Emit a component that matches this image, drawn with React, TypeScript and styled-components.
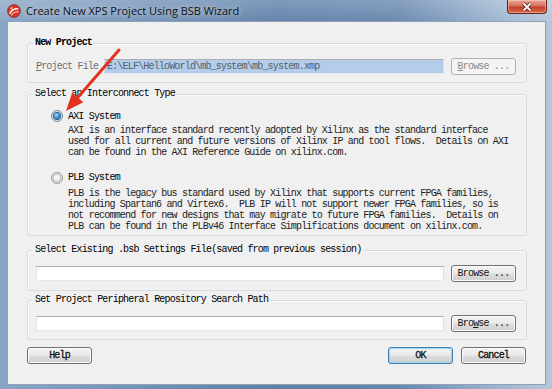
import React from "react";
import styled, { createGlobalStyle } from "styled-components";

const mono = `"Liberation Mono", "DejaVu Sans Mono", monospace`;
const tracking = "-0.82px";

const GlobalStyle = createGlobalStyle`
  html, body {
    margin: 0;
    padding: 0;
  }
  body {
    width: 552px;
    height: 389px;
    overflow: hidden;
    background: #fff;
  }
  * {
    box-sizing: border-box;
  }
`;

const AXI_TEXT = `AXI is an interface standard recently adopted by Xilinx as the standard interface
used for all current and future versions of Xilinx IP and tool flows.  Details on AXI
can be found in the AXI Reference Guide on xilinx.com.`;

const PLB_TEXT = `PLB is the legacy bus standard used by Xilinx that supports current FPGA families,
including Spartan6 and Virtex6.  PLB IP will not support newer FPGA families, so is
not recommend for new designs that may migrate to future FPGA families.  Details on
PLB can be found in the PLBv46 Interface Simplifications document on xilinx.com.`;

function AppIcon() {
  return (
    <svg width="14" height="14" viewBox="0 0 14 14">
      <circle cx="7" cy="7" r="6.4" fill="#d7352b" stroke="#8e1d16" strokeWidth="0.7" />
      <path d="M2.6 9.6 C4.6 6.2 7.6 4.6 11.2 4.8" stroke="#fff" strokeWidth="1.5" fill="none" />
      <path d="M4 11.4 C6 8.8 8.6 7.6 11.8 7.8" stroke="#f7c9b0" strokeWidth="1.1" fill="none" />
      <circle cx="4.6" cy="4.4" r="1.4" fill="#f29a6a" />
    </svg>
  );
}

export default function App() {
  return (
    <>
      <GlobalStyle />
      <Frame>
        <TitleBar>
          <AppIcon />
          <Title>Create New XPS Project Using BSB Wizard</Title>
          <CloseButton>
            <svg width="14" height="10" viewBox="0 0 14 10">
              <path d="M3.5 1.5 L10.5 8.5 M10.5 1.5 L3.5 8.5" stroke="#4a1a14" strokeWidth="3.4" />
              <path d="M3.5 1.5 L10.5 8.5 M10.5 1.5 L3.5 8.5" stroke="#fff" strokeWidth="1.8" />
            </svg>
          </CloseButton>
        </TitleBar>

        <Client>
          <Group $gap={15} $pad="9px 10px 7px 8px">
            <Legend $bold>New Project</Legend>
            <FileRow>
              <FieldLabel>
                <u>P</u>roject File
              </FieldLabel>
              <TextBox $selected readOnly value="E:\ELF\HelloWorld\mb_system\mb_system.xmp" />
              <BrowseButton disabled>
                <u>B</u>rowse ...
              </BrowseButton>
            </FileRow>
          </Group>

          <Group $gap={5} $pad="10px 10px 3px 8px">
            <Legend>Select an Interconnect Type</Legend>
            <OptionRow>
              <Radio $checked />
              <span>AXI System</span>
            </OptionRow>
            <Description>{AXI_TEXT}</Description>
            <OptionRow $top={13}>
              <Radio />
              <span>PLB System</span>
            </OptionRow>
            <Description $top={4}>{PLB_TEXT}</Description>
          </Group>

          <Group $gap={8} $pad="9px 10px 8px 8px">
            <Legend>Select Existing .bsb Settings File(saved from previous session)</Legend>
            <FileRow>
              <TextBox readOnly value="" />
              <BrowseButton>Browse ...</BrowseButton>
            </FileRow>
          </Group>

          <Group $gap={3} $pad="9px 10px 7px 8px">
            <Legend>Set Project Peripheral Repository Search Path</Legend>
            <FileRow>
              <TextBox readOnly value="" />
              <BrowseButton>
                Bro<u>w</u>se ...
              </BrowseButton>
            </FileRow>
          </Group>

          <ButtonBar>
            <DialogButton>Help</DialogButton>
            <DialogButton $default $push>
              OK
            </DialogButton>
            <DialogButton>Cancel</DialogButton>
          </ButtonBar>
        </Client>

        <Annotation width="552" height="389" viewBox="0 0 552 389">
          <line x1="119" y1="50" x2="77.8" y2="97.4" stroke="#e4321f" strokeWidth="3" strokeLinecap="round" />
          <polygon points="66,111 83.3,102.2 72.3,92.6" fill="#e4321f" />
        </Annotation>
      </Frame>
    </>
  );
}

const Frame = styled.div`
  position: relative;
  width: 552px;
  height: 389px;
  display: flex;
  flex-direction: column;
  padding: 0 6px 4px 7px;
  background: linear-gradient(
    90deg,
    #89a5c5 0%,
    #7594b9 22%,
    #5f7fa8 50%,
    #6686ae 72%,
    #9db5d0 90%,
    #b5c7dc 100%
  );
`;

const TitleBar = styled.div`
  height: 21px;
  flex: none;
  display: flex;
  align-items: center;
  background: linear-gradient(180deg, rgba(255, 255, 255, 0.22), rgba(255, 255, 255, 0.04));
  margin: 0 -6px 0 -7px;
  padding-left: 7px;
`;

const Title = styled.div`
  margin-left: 5px;
  font-family: "Open Sans", "Noto Sans", sans-serif;
  font-size: 11px;
  color: #111;
  text-shadow: 0 0 6px rgba(255, 255, 255, 0.8);
`;

const CloseButton = styled.div`
  align-self: flex-start;
  margin-left: auto;
  margin-right: 5px;
  width: 40px;
  height: 14px;
  display: grid;
  place-items: center;
  border: 1px solid #6b1f17;
  border-top: none;
  border-radius: 0 0 4px 4px;
  background: linear-gradient(180deg, #e8a898 0%, #d5705c 45%, #c2402c 55%, #d86a4c 100%);
  box-shadow: inset 0 0 0 1px rgba(255, 210, 200, 0.5);
`;

const Client = styled.div`
  flex: 1;
  display: flex;
  flex-direction: column;
  background: #f0f0f0;
  border: 1px solid #8fa2b8;
  padding: 0 18px 0 19px;
  font-family: ${mono};
  font-size: 10px;
  letter-spacing: ${tracking};
  color: #1a1a1a;
`;

const Group = styled.fieldset<{ $gap: number; $pad: string }>`
  margin: ${(p) => p.$gap}px 0 0;
  padding: ${(p) => p.$pad};
  border: 1px solid #d5dbe0;
  border-radius: 3px;
  box-shadow: inset 1px 1px 0 #fbfbfb;
  min-width: 0;
`;

const Legend = styled.legend<{ $bold?: boolean }>`
  padding: 0 2px;
  margin-left: -3px;
  line-height: 12px;
  font-weight: ${(p) => (p.$bold ? 700 : 400)};
  color: #000;
`;

const FileRow = styled.div`
  display: flex;
  align-items: center;
  gap: 7px;
  height: 17px;
`;

const FieldLabel = styled.span`
  flex: none;
  width: 64px;
  margin-right: -3px;
  color: #6d6d6d;
  white-space: nowrap;
`;

const TextBox = styled.input<{ $selected?: boolean }>`
  flex: 1;
  min-width: 0;
  height: 15px;
  margin: 0;
  padding: 0 2px;
  border: 1px solid;
  border-color: #abadb3 #dbdfe6 #e3e9ef #e2e3ea;
  background: ${(p) => (p.$selected ? "#b3cdea" : "#fff")};
  font-family: ${mono};
  font-size: 10px;
  letter-spacing: ${tracking};
  color: ${(p) => (p.$selected ? "#56606c" : "#000")};
  outline: none;
`;

const buttonFace = `
  border: 1px solid #707070;
  border-radius: 3px;
  background: linear-gradient(180deg, #f2f2f2 0%, #ebebeb 48%, #dddddd 52%, #cfcfcf 100%);
  box-shadow: inset 0 0 0 1px #fbfbfb;
`;

const BrowseButton = styled.button`
  flex: none;
  width: 65px;
  height: 17px;
  padding: 0;
  margin: 0;
  ${buttonFace}
  font-family: ${mono};
  font-size: 10px;
  letter-spacing: ${tracking};
  color: #111;

  &:disabled {
    border-color: #adb2b5;
    background: #f4f4f4;
    box-shadow: none;
    color: #8a8a8a;
  }
`;

const OptionRow = styled.div<{ $top?: number }>`
  display: flex;
  align-items: center;
  gap: 5px;
  height: 12px;
  margin: ${(p) => p.$top ?? 0}px 0 0 15px;
  color: #000;
`;

const Radio = styled.span<{ $checked?: boolean }>`
  flex: none;
  width: 12px;
  height: 12px;
  border-radius: 50%;
  display: grid;
  place-items: center;
  border: 1px solid ${(p) => (p.$checked ? "#6f8ea8" : "#9a9a9a")};
  background: radial-gradient(circle at 50% 50%, #e6eef4 30%, #cfd8df 100%);

  &::after {
    content: "";
    width: 6px;
    height: 6px;
    border-radius: 50%;
    background: ${(p) =>
      p.$checked
        ? "radial-gradient(circle at 40% 35%, #a6e2fb 0%, #2f8ac2 55%, #174a78 100%)"
        : "radial-gradient(circle at 40% 35%, #fdfdfd 0%, #e2e2e2 100%)"};
    box-shadow: ${(p) => (p.$checked ? "0 0 0 1px #2a5f88" : "0 0 0 1px #c4c4c4")};
  }
`;

const Description = styled.div<{ $top?: number }>`
  margin: ${(p) => p.$top ?? 3}px 0 0 32px;
  white-space: pre;
  line-height: 11.2px;
  color: #222;
`;

const ButtonBar = styled.div`
  display: flex;
  gap: 8px;
  margin-top: 7px;
  padding-right: 1px;
`;

const DialogButton = styled.button<{ $default?: boolean; $push?: boolean }>`
  width: 65px;
  height: 17px;
  padding: 0;
  margin: 0 0 0 ${(p) => (p.$push ? "auto" : "0")};
  ${buttonFace}
  font-family: ${mono};
  font-size: 10px;
  letter-spacing: ${tracking};
  -webkit-text-stroke: 0.3px #111;
  color: #111;
  ${(p) =>
    p.$default &&
    `
    border-color: #3c7fb1;
    box-shadow: inset 0 0 0 1px #9fd6f3;
  `}
`;

const Annotation = styled.svg`
  position: absolute;
  left: 0;
  top: 0;
  pointer-events: none;
`;
